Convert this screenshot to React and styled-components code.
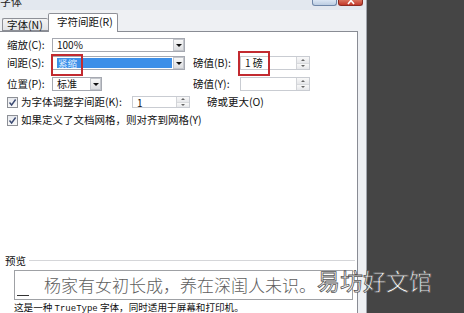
import React from 'react';
import styled, { createGlobalStyle } from 'styled-components';

const Global = createGlobalStyle`
  html, body { margin: 0; padding: 0; }
  body {
    width: 464px; height: 313px; overflow: hidden; background: #454545;
    font-family: "Noto Sans CJK SC", "Noto Sans", sans-serif;
  }
`;

const Screen = styled.div`
  position: relative;
  width: 464px; height: 313px; overflow: hidden;
  display: flex; background: #454545;
`;

const Dialog = styled.div`
  width: 366px; height: 313px; flex: none;
  background: #eef0f3;
  border-right: 1px solid #a1a5ac;
  display: flex; flex-direction: column;
`;

const TitleBar = styled.div`
  height: 10px; flex: none; overflow: hidden;
  display: flex; justify-content: space-between; align-items: flex-start;
  background: #e3e8ef;
`;

const TitleText = styled.span`
  font-size: 11px; line-height: 11px; margin-top: -4px; color: #222;
`;

const WinButtons = styled.div`
  display: flex; gap: 1px; margin-right: 3px;
`;

const WinBtn = styled.div`
  width: 25px; height: 6px; box-sizing: border-box;
  border: 1px solid ${p => (p.$close ? '#8c2b22' : '#6f87a8')};
  border-top: none; border-radius: 0 0 3px 3px;
  background: ${p => (p.$close ? 'linear-gradient(#d9735f, #c2392b)' : 'linear-gradient(#dbe6f3, #bccde2)')};
  display: flex; justify-content: center; align-items: flex-end; overflow: hidden;
`;

const TabRow = styled.div`
  height: 22px; flex: none; margin-bottom: -1px;
  display: flex; align-items: flex-end; padding-left: 2px;
  position: relative; z-index: 1;
`;

const Tab = styled.div`
  box-sizing: border-box;
  width: ${p => (p.$active ? 70 : 46)}px;
  height: ${p => (p.$active ? 19 : 13)}px;
  margin-bottom: ${p => (p.$active ? 0 : 1)}px;
  border: 1px solid #8e9097;
  border-bottom: ${p => (p.$active ? 'none' : '1px solid #8e9097')};
  ${p => (p.$active ? '' : 'border-right: none;')}
  background: ${p => (p.$active ? '#fff' : 'linear-gradient(#f4f4f4, #e2e3e6)')};
  border-radius: 2px 2px 0 0;
  font-size: 10.5px; line-height: ${p => (p.$active ? 15 : 11)}px;
  padding-left: ${p => (p.$active ? 8 : 4)}px;
  color: #111; white-space: nowrap;
`;

const Panel = styled.div`
  flex: 1; margin-right: 8px;
  background: #fff;
  border: 1px solid #898c94; border-left: none; border-bottom: none;
  display: flex; flex-direction: column;
`;

const Row = styled.div`
  display: flex; align-items: center;
  height: ${p => p.$h || 14}px;
  margin-top: ${p => p.$mt || 0}px;
  padding-left: 7px;
`;

const Label = styled.div`
  width: ${p => (p.$w ? `${p.$w}px` : 'auto')};
  margin-left: ${p => p.$ml || 0}px;
  flex: none;
  font-size: 10.5px; line-height: 14px; color: #111; white-space: nowrap;
`;

const Field = styled.div`
  position: relative; flex: none;
  width: ${p => p.$w}px; height: ${p => p.$h || 14}px;
  margin-left: ${p => p.$ml || 0}px;
  box-sizing: border-box;
  border: 1px solid ${p => (p.$light ? '#c9ccd2' : '#a6a9b1')};
  background: #fff;
  display: flex; align-items: stretch;
`;

const FieldText = styled.div`
  flex: 1; white-space: nowrap;
  font-size: 10px; line-height: 12px;
  padding-left: ${p => p.$pl || 4}px;
  color: #111;
`;

const Selected = styled.div`
  flex: 1; margin: 1px 1px 1px 4px;
  background: #3d8fe8;
  color: #dfeeff; font-size: 9.5px; line-height: 10px; padding-left: 1px;
  white-space: nowrap;
`;

const DropBtn = styled.div`
  width: 11px; flex: none; box-sizing: border-box;
  border: 1px solid #c3c6cc;
  background: linear-gradient(#f8f8f8, #dcdde0);
  display: flex; align-items: center; justify-content: center;
  &::after {
    content: '';
    border-left: 3px solid transparent;
    border-right: 3px solid transparent;
    border-top: 3px solid #111;
  }
`;

const SpinBtns = styled.div`
  width: 12px; flex: none; display: flex; flex-direction: column;
  border-left: 1px solid #d2d4d8;
`;

const SpinHalf = styled.div`
  flex: 1; background: linear-gradient(#f9f9f9, #e6e7ea);
  display: flex; align-items: center; justify-content: center;
  & + & { border-top: 1px solid #d8dadd; }
  &::after {
    content: '';
    border-left: 2px solid transparent;
    border-right: 2px solid transparent;
    ${p => (p.$down ? 'border-top: 2px solid #666;' : 'border-bottom: 2px solid #666;')}
  }
`;

const RedMark = styled.div`
  position: absolute;
  left: ${p => p.$l}px; top: ${p => p.$t}px;
  width: ${p => p.$w}px; height: ${p => p.$h}px;
  box-sizing: border-box;
  border: 2px solid #c22a30;
  pointer-events: none;
`;

const CheckBox = styled.div`
  width: 11px; height: 11px; flex: none; box-sizing: border-box;
  border: 1px solid #8d9096;
  background: linear-gradient(#e7e9ee, #fafafa);
  margin-right: 3px;
  display: flex; align-items: center; justify-content: center;
`;

const Legend = styled.div`
  display: flex; align-items: center;
  margin: 129px 2px 0 5px; height: 12px;
`;

const LegendLine = styled.div`
  flex: 1; margin-left: 3px; height: 0;
  border-top: 1px solid #d5d6d9; border-bottom: 1px solid #fff;
`;

const PreviewBox = styled.div`
  margin: 3px 0 0 14px; width: 339px; height: 30px; box-sizing: border-box;
  border: 1px solid #9fa1a5; background: #fff;
  display: flex; align-items: center;
`;

const Caret = styled.div`
  width: 12px; height: 1px; flex: none; align-self: flex-end;
  margin: 0 0 3px 2px; border-bottom: 1px solid #333;
`;

const PreviewText = styled.div`
  margin-left: 15px; font-size: 17px; line-height: 20px; color: #5e5e5e;
  white-space: nowrap; font-weight: 300;
`;

const Note = styled.div`
  margin: 2px 0 0 14px; font-size: 9.6px; line-height: 11px; color: #111; white-space: nowrap;
`;

const Mono = styled.span`
  font-family: "Liberation Mono", monospace; font-size: 9px;
`;

const Dark = styled.div`
  flex: 1; background: #454545;
`;

const Watermark = styled.div`
  position: absolute; left: 317px; top: 266px;
  font-size: 23px; line-height: 28px; color: #fff; white-space: nowrap;
  -webkit-text-stroke: 0.8px #555;
  font-weight: 400;
`;

const Check = () => (
  <svg width="9" height="9" viewBox="0 0 9 9">
    <path d="M1.5 4.5 L3.6 7 L7.6 1.5" fill="none" stroke="#3b4a72" strokeWidth="1.4" />
  </svg>
);

const CloseX = () => (
  <svg width="8" height="5" viewBox="0 0 8 5">
    <path d="M1 -3 L7 4 M7 -3 L1 4" stroke="#fff" strokeWidth="1.6" />
  </svg>
);

const Spin = ({ w, h, text, light, children, ml }) => (
  <Field $w={w} $h={h} $light={light} $ml={ml}>
    <FieldText>{text}</FieldText>
    <SpinBtns>
      <SpinHalf />
      <SpinHalf $down />
    </SpinBtns>
    {children}
  </Field>
);

export default function App() {
  return (
    <Screen>
      <Global />
      <Dialog>
        <TitleBar>
          <TitleText>字体</TitleText>
          <WinButtons>
            <WinBtn />
            <WinBtn $close><CloseX /></WinBtn>
          </WinButtons>
        </TitleBar>
        <TabRow>
          <Tab>字体(N)</Tab>
          <Tab $active>字符间距(R)</Tab>
        </TabRow>
        <Panel>
          <Row $mt={6}>
            <Label $w={45}>缩放(C):</Label>
            <Field $w={133}>
              <FieldText>100%</FieldText>
              <DropBtn />
            </Field>
          </Row>
          <Row $mt={4}>
            <Label $w={45}>间距(S):</Label>
            <Field $w={133}>
              <Selected>紧缩</Selected>
              <DropBtn />
              <RedMark $l={-2} $t={-3} $w={32} $h={22} />
            </Field>
            <Label $w={47} $ml={8}>磅值(B):</Label>
            <Spin w={70} light text="1 磅">
              <RedMark $l={-3} $t={-6} $w={32} $h={25} />
            </Spin>
          </Row>
          <Row $mt={7}>
            <Label $w={45}>位置(P):</Label>
            <Field $w={50}>
              <FieldText>标准</FieldText>
              <DropBtn />
            </Field>
            <Label $w={47} $ml={91}>磅值(Y):</Label>
            <Spin w={70} light text="" />
          </Row>
          <Row $mt={5} $h={12}>
            <CheckBox><Check /></CheckBox>
            <Label $w={111}>为字体调整字间距(K):</Label>
            <Spin w={58} h={12} light text="1" />
            <Label $ml={17}>磅或更大(O)</Label>
          </Row>
          <Row $mt={6} $h={12}>
            <CheckBox><Check /></CheckBox>
            <Label>如果定义了文档网格，则对齐到网格(Y)</Label>
          </Row>
          <Legend>
            <Label>预览</Label>
            <LegendLine />
          </Legend>
          <PreviewBox>
            <Caret />
            <PreviewText>杨家有女初长成，养在深闺人未识。</PreviewText>
          </PreviewBox>
          <Note>这是一种 <Mono>TrueType</Mono> 字体，同时适用于屏幕和打印机。</Note>
        </Panel>
      </Dialog>
      <Dark />
      <Watermark>易坊好文馆</Watermark>
    </Screen>
  );
}
